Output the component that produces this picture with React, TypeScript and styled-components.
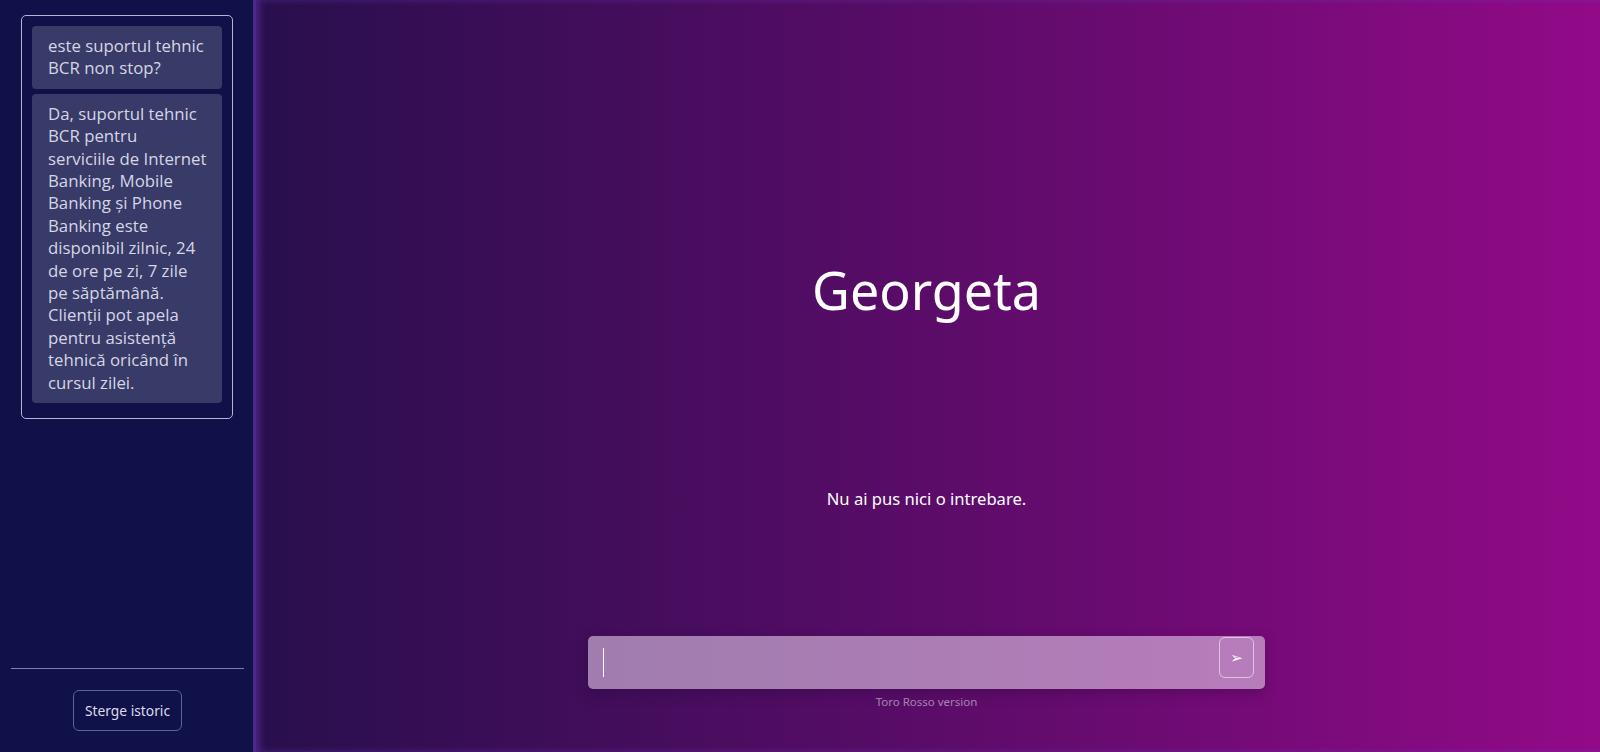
import React from "react";
import styled, { createGlobalStyle } from "styled-components";

const GlobalStyle = createGlobalStyle`
  html, body { margin: 0; padding: 0; height: 100%; }
  body {
    font-family: "Noto Sans", "Open Sans", sans-serif;
    background: #0f1148;
    overflow: hidden;
  }
  #root { height: 100%; }
  * { box-sizing: border-box; }
`;

const Layout = styled.div`
  display: flex;
  width: 100vw;
  height: 100vh;
`;

const Sidebar = styled.aside`
  width: 253px;
  flex: 0 0 253px;
  display: flex;
  flex-direction: column;
  background: #0f1148;
`;

const HistoryBox = styled.div`
  margin: 15px 20px 0 21px;
  padding: 10px 10px 10px;
  border: 1px solid #b4b6d8;
  border-radius: 5px;
`;

const HistoryItem = styled.div`
  background: #383a68;
  color: #d6d6e6;
  font-family: "Open Sans", "Noto Sans", sans-serif;
  font-size: 16.8px;
  line-height: 22.4px;
  padding: 9px 14px 9px 16px;
  border-radius: 4px;
  margin-bottom: 5px;
`;

const SidebarSpacer = styled.div`
  flex: 1;
`;

const SidebarFooter = styled.div`
  margin: 0 9px 0 11px;
  border-top: 1px solid #7d7fb0;
  padding: 21px 0 21px;
  display: flex;
  justify-content: center;
`;

const ClearButton = styled.button`
  font-family: "Noto Sans", "Open Sans", sans-serif;
  font-size: 13.8px;
  color: #dcdcea;
  background: transparent;
  border: 1px solid #5e609a;
  border-radius: 6px;
  height: 41px;
  padding: 0 11px;
  cursor: pointer;
`;

const Main = styled.main`
  flex: 1;
  display: flex;
  flex-direction: column;
  align-items: center;
  background: linear-gradient(90deg, #280f4d 0%, #5a0c68 50%, #920a88 100%);
  box-shadow: inset 3px 0 0 #4a2a86, inset 7px 0 6px rgba(110, 60, 190, 0.45);
`;

const Title = styled.h1`
  margin: 254px 0 0;
  font-weight: 400;
  font-size: 52px;
  line-height: 71px;
  color: #ffffff;
`;

const EmptyNote = styled.p`
  margin: 163px 0 0;
  font-size: 16.6px;
  line-height: 22px;
  color: #ffffff;
`;

const Spacer = styled.div`
  flex: 1;
`;

const InputBar = styled.div`
  position: relative;
  width: 677px;
  height: 53px;
  display: flex;
  align-items: flex-start;
  padding: 1px 11px 0 15px;
  border-radius: 5px;
  background: rgba(236, 214, 240, 0.56);
  box-shadow: 0 4px 14px rgba(20, 0, 40, 0.25);
`;

const Field = styled.textarea`
  flex: 1;
  height: 40px;
  margin-top: 11px;
  resize: none;
  border: none;
  outline: none;
  background: transparent;
  color: #ffffff;
  caret-color: #ffffff;
  font-family: "Noto Sans", "Open Sans", sans-serif;
  font-size: 21px;
  line-height: 29px;
  padding: 0;
  overflow: hidden;
`;

const Caret = styled.span`
  position: absolute;
  left: 15px;
  top: 12px;
  width: 1px;
  height: 29px;
  background: #ffffff;
  pointer-events: none;
`;

const SendButton = styled.button`
  width: 35px;
  height: 41px;
  flex: 0 0 35px;
  display: flex;
  align-items: center;
  justify-content: center;
  background: transparent;
  border: 1px solid rgba(255, 255, 255, 0.55);
  border-radius: 6px;
  color: #ffffff;
  font-family: "DejaVu Sans", sans-serif;
  font-size: 15px;
  padding: 0;
  cursor: pointer;
`;

const Caption = styled.div`
  margin: 5px 0 42px;
  font-size: 11.5px;
  line-height: 16px;
  color: rgba(255, 255, 255, 0.5);
`;

const history = [
  "este suportul tehnic BCR non stop?",
  "Da, suportul tehnic BCR pentru serviciile de Internet Banking, Mobile Banking și Phone Banking este disponibil zilnic, 24 de ore pe zi, 7 zile pe săptămână. Clienții pot apela pentru asistență tehnică oricând în cursul zilei.",
];

export default function App() {
  return (
    <>
      <GlobalStyle />
      <Layout>
        <Sidebar>
          <HistoryBox>
            {history.map((h, i) => (
              <HistoryItem key={i}>{h}</HistoryItem>
            ))}
          </HistoryBox>
          <SidebarSpacer />
          <SidebarFooter>
            <ClearButton>Sterge istoric</ClearButton>
          </SidebarFooter>
        </Sidebar>
        <Main>
          <Title>Georgeta</Title>
          <EmptyNote>Nu ai pus nici o intrebare.</EmptyNote>
          <Spacer />
          <InputBar>
            <Field rows={1} aria-label="Intrebare" />
            <Caret />
            <SendButton aria-label="Trimite">➢</SendButton>
          </InputBar>
          <Caption>Toro Rosso version</Caption>
        </Main>
      </Layout>
    </>
  );
}
